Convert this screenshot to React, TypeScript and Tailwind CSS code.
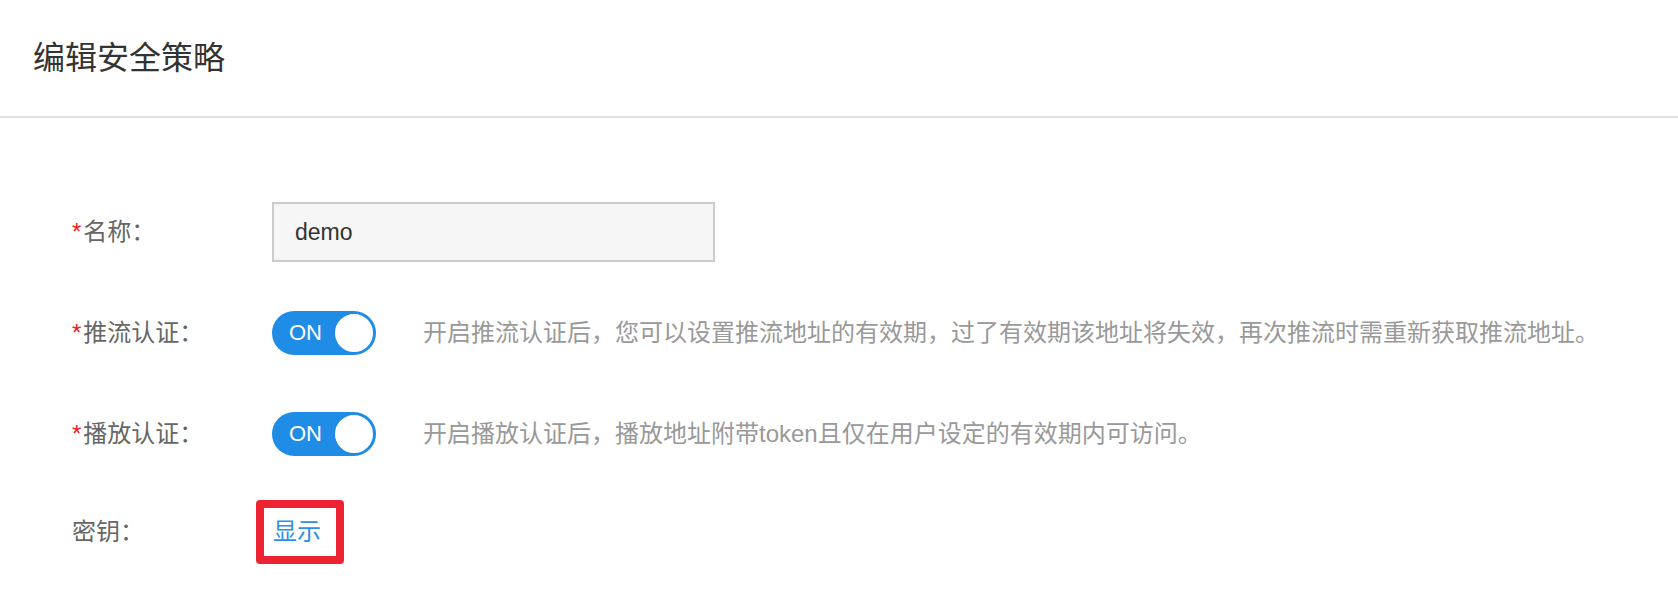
import React from "react";

const font = { fontFamily: '"Liberation Sans", "Noto Sans CJK SC", sans-serif' };

function Toggle() {
  return (
    <div className="relative w-[104px] h-[44px] rounded-full bg-[#1f8ce6] shrink-0">
      <span className="absolute left-[17px] top-0 h-[44px] flex items-center text-[22px] text-white leading-none">ON</span>
      <span className="absolute right-[1px] top-[1px] w-[42px] h-[42px] rounded-full bg-white border-2 border-[#1f8ce6]" />
    </div>
  );
}

function Label({ text, required }: { text: string; required?: boolean }) {
  return (
    <div className="w-[200px] shrink-0 flex items-center text-[24px] text-[#666]">
      {required && <span className="text-[#f02020] text-[24px] mr-[2px] leading-none">*</span>}
      <span>{text}：</span>
    </div>
  );
}

export default function App() {
  return (
    <div className="w-[1678px] h-[600px] bg-white overflow-hidden" style={font}>
      <div className="h-[118px] flex items-center px-[33px] border-b-2 border-[#e2e2e2]">
        <h1 className="text-[32px] text-[#333] font-normal">编辑安全策略</h1>
      </div>
      <div className="pl-[72px]">
        <div className="mt-[84px] h-[60px] flex items-center">
          <Label text="名称" required />
          <div className="w-[443px] h-[60px] border-2 border-[#cccccc] bg-[#f6f6f6] flex items-center pl-[21px] text-[23px] text-[#333]">
            demo
          </div>
        </div>
        <div className="mt-[49px] h-[44px] flex items-center">
          <Label text="推流认证" required />
          <Toggle />
          <p className="ml-[47px] text-[24px] text-[#999]">
            开启推流认证后，您可以设置推流地址的有效期，过了有效期该地址将失效，再次推流时需重新获取推流地址。
          </p>
        </div>
        <div className="mt-[57px] h-[44px] flex items-center">
          <Label text="播放认证" required />
          <Toggle />
          <p className="ml-[47px] text-[24px] text-[#999]">
            开启播放认证后，播放地址附带token且仅在用户设定的有效期内可访问。
          </p>
        </div>
        <div className="mt-[54px] h-[44px] flex items-center">
          <Label text="密钥" />
          <div className="-ml-[16px] h-[64px] inline-flex items-center border-[8px] border-[#ee2331] rounded-[4px] pl-[9px] pr-[15px]">
            <a className="text-[24px] text-[#2d8fe6] cursor-pointer">显示</a>
          </div>
        </div>
      </div>
    </div>
  );
}
